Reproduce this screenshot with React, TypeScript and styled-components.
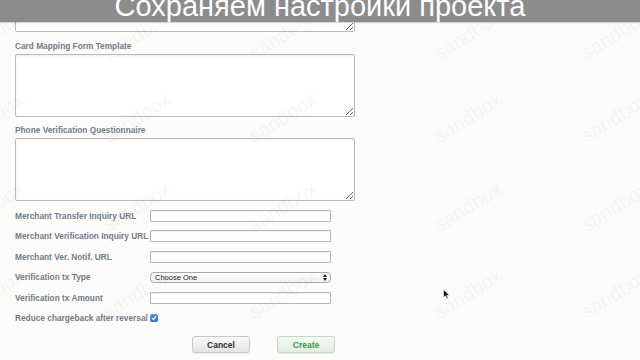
import styled, { createGlobalStyle } from "styled-components";

const GlobalStyle = createGlobalStyle`
  html, body {
    margin: 0;
    padding: 0;
    background: #fcfcfa;
    overflow: hidden;
  }
`;

const Page = styled.div`
  position: relative;
  width: 640px;
  height: 360px;
  overflow: hidden;
  background: #fcfcfa;
  font-family: "Liberation Sans", Arial, sans-serif;
`;

const Banner = styled.div`
  position: absolute;
  top: 0;
  left: 0;
  right: 0;
  height: 22px;
  background: #8c8c8c;
  box-shadow: 0 1px 1px rgba(0, 0, 0, 0.15);
  display: flex;
  justify-content: center;
  align-items: flex-end;
  overflow: hidden;
  z-index: 3;
`;

const BannerText = styled.span`
  color: #ffffff;
  font-family: "Liberation Sans", Arial, sans-serif;
  font-size: 29px;
  line-height: 29px;
  margin-bottom: 1px;
  white-space: nowrap;
`;

const Watermarks = styled.div`
  position: absolute;
  inset: 0;
  pointer-events: none;
  z-index: 2;
`;

const Mark = styled.span`
  position: absolute;
  font-family: "Liberation Sans", Arial, sans-serif;
  font-size: 20px;
  color: rgba(0, 0, 0, 0.055);
  transform: translate(-50%, -50%) rotate(-32deg);
  white-space: nowrap;
`;

const Form = styled.div`
  display: flex;
  flex-direction: column;
  width: 340px;
  margin-top: -31px;
  padding-left: 15px;
`;

const Field = styled.div`
  display: flex;
  flex-direction: column;
  margin-bottom: 8.5px;
`;

const Label = styled.label`
  font-size: 8.3px;
  line-height: 10px;
  font-weight: bold;
  color: #717c89;
  white-space: nowrap;
`;

const BlockLabel = styled(Label)`
  margin-bottom: 3px;
`;

const TextArea = styled.textarea`
  box-sizing: border-box;
  width: 340px;
  height: 63px;
  margin: 0;
  border: 1px solid #b9b9b9;
  border-radius: 2px;
  background: #ffffff;
  box-shadow: inset 0 1px 2px rgba(0, 0, 0, 0.08);
  resize: vertical;
`;

const Grid = styled.div`
  display: grid;
  grid-template-columns: 135px 181px;
  grid-auto-rows: 12px;
  row-gap: 8.5px;
  align-items: center;
`;

const TextInput = styled.input`
  box-sizing: border-box;
  width: 181px;
  height: 12px;
  margin: 0;
  border: 1px solid #b5b5b5;
  border-radius: 1px;
  background: #ffffff;
  box-shadow: inset 0 1px 1px rgba(0, 0, 0, 0.06);
`;

const SelectBox = styled.div`
  box-sizing: border-box;
  width: 181px;
  height: 11px;
  border: 1px solid #a9a9a9;
  border-radius: 4px;
  background: linear-gradient(#ffffff, #f1f1f1);
  display: flex;
  align-items: center;
  justify-content: space-between;
  padding: 0 3px 0 4px;
  font-size: 7.5px;
  color: #222;
`;

const Arrows = styled.svg`
  width: 4px;
  height: 7px;
`;

const Check = styled.span`
  width: 8px;
  height: 8px;
  border-radius: 2px;
  background: linear-gradient(#5a9be6, #2f6fc9);
  display: flex;
  align-items: center;
  justify-content: center;
`;

const Actions = styled.div`
  display: flex;
  gap: 27px;
  padding-left: 177px;
  margin-top: 12px;
`;

const Button = styled.button<{ $primary?: boolean }>`
  box-sizing: border-box;
  width: 58px;
  height: 17px;
  padding: 0;
  border: 1px solid ${(p) => (p.$primary ? "#c4d6c4" : "#c8c8c8")};
  border-radius: 3px;
  background: ${(p) =>
    p.$primary
      ? "linear-gradient(#f6fbf5, #e2ece0)"
      : "linear-gradient(#f9f9f9, #e4e4e4)"};
  font-family: "Liberation Sans", Arial, sans-serif;
  font-size: 8.5px;
  font-weight: bold;
  color: ${(p) => (p.$primary ? "#3c9a4b" : "#333")};
  box-shadow: 0 1px 1px rgba(0, 0, 0, 0.08);
`;

const Cursor = styled.svg`
  position: absolute;
  left: 443px;
  top: 289px;
  width: 7px;
  height: 10px;
  z-index: 4;
`;

const rows = [
  "Merchant Transfer Inquiry URL",
  "Merchant Verification Inquiry URL",
  "Merchant Ver. Notif. URL",
];

const markCols = [-10, 137, 283, 468, 615];
const markRows = [35, 118, 207, 294];

export default function App() {
  return (
    <Page>
      <GlobalStyle />
      <Form>
        <Field>
          <TextArea />
        </Field>
        <Field>
          <BlockLabel>Card Mapping Form Template</BlockLabel>
          <TextArea />
        </Field>
        <Field>
          <BlockLabel>Phone Verification Questionnaire</BlockLabel>
          <TextArea />
        </Field>
        <Grid>
          {rows.map((r) => (
            <>
              <Label key={r}>{r}</Label>
              <TextInput />
            </>
          ))}
          <Label>Verification tx Type</Label>
          <SelectBox>
            <span>Choose One</span>
            <Arrows viewBox="0 0 4 7">
              <path d="M0 3 L2 0 L4 3 Z M0 4 L2 7 L4 4 Z" fill="#222" />
            </Arrows>
          </SelectBox>
          <Label>Verification tx Amount</Label>
          <TextInput />
          <Label>Reduce chargeback after reversal</Label>
          <Check>
            <svg width="6" height="6" viewBox="0 0 6 6">
              <path d="M1 3.2 L2.4 4.6 L5 1.4" stroke="#fff" strokeWidth="1.2" fill="none" />
            </svg>
          </Check>
        </Grid>
        <Actions>
          <Button>Cancel</Button>
          <Button $primary>Create</Button>
        </Actions>
      </Form>
      <Watermarks>
        {markRows.map((y) =>
          markCols.map((x) => (
            <Mark key={`${x}-${y}`} style={{ left: x, top: y }}>
              sandbox
            </Mark>
          ))
        )}
      </Watermarks>
      <Banner>
        <BannerText>Сохраняем настройки проекта</BannerText>
      </Banner>
      <Cursor viewBox="0 0 7 10">
        <path d="M0.5 0.5 L0.5 8.5 L2.5 6.8 L4 9.5 L5.2 9 L3.8 6.3 L6.3 6.2 Z" fill="#111" stroke="#fff" strokeWidth="0.6" />
      </Cursor>
    </Page>
  );
}
